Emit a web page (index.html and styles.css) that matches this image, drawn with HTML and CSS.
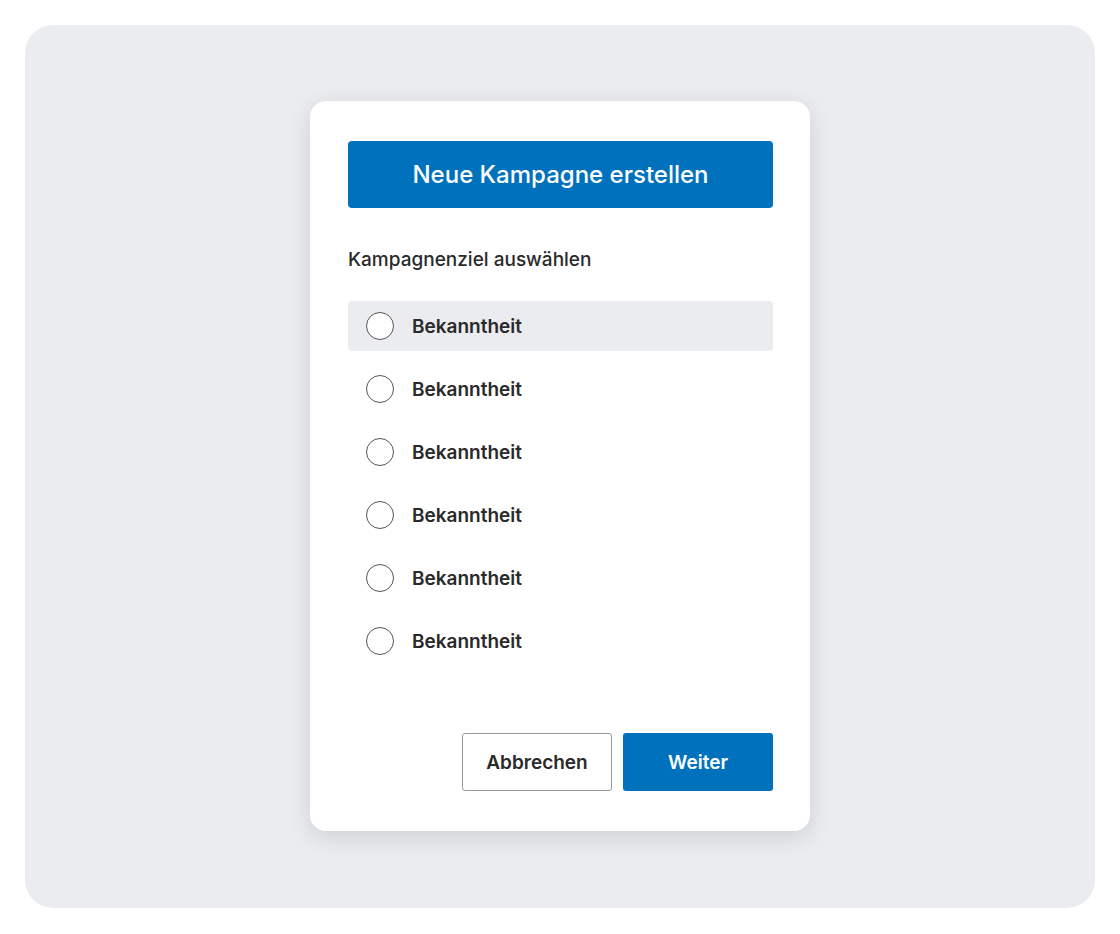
FILE: index.html
```html
<!DOCTYPE html>
<html lang="de">
<head>
    <meta charset="UTF-8">
    <meta name="viewport" content="width=device-width, initial-scale=1.0">
    <title>Neue Kampagne erstellen</title>
    <link rel="stylesheet" href="styles.css">
</head>
<body>
    <div class="panel">
        <div class="card">
            <div class="card-header">Neue Kampagne erstellen</div>
            <p class="label">Kampagnenziel auswählen</p>
            <div class="options">
                <label class="option active"><span class="radio"></span>Bekanntheit</label>
                <label class="option"><span class="radio"></span>Bekanntheit</label>
                <label class="option"><span class="radio"></span>Bekanntheit</label>
                <label class="option"><span class="radio"></span>Bekanntheit</label>
                <label class="option"><span class="radio"></span>Bekanntheit</label>
                <label class="option"><span class="radio"></span>Bekanntheit</label>
            </div>
            <div class="actions">
                <button class="btn btn-outline">Abbrechen</button>
                <button class="btn btn-primary">Weiter</button>
            </div>
        </div>
    </div>
</body>
</html>
```

FILE: styles.css
```css
body {
    margin: 0;
    font-family: Inter, "Noto Sans", sans-serif;
    background-color: #fff;
    color: #2a2a2a;
}
.panel {
    margin: 25px;
    height: 883px;
    padding-top: 76px;
    box-sizing: border-box;
    border-radius: 28px;
    background-color: #ebecf0;
    display: flex;
    align-items: flex-start;
    justify-content: center;
}
.card {
    width: 425px;
    padding: 40px 37px 40px 38px;
    background-color: #fff;
    border-radius: 16px;
    box-shadow: 0 6px 24px rgba(0,0,0,0.12);
    display: flex;
    flex-direction: column;
}
.card-header {
    height: 67px;
    border-radius: 4px;
    background-color: #0072bd;
    color: #fff;
    font-size: 24px;
    font-weight: 500;
    display: flex;
    align-items: center;
    justify-content: center;
}
.label {
    margin: 41px 0 30px;
    font-size: 19px;
    line-height: 22px;
    font-weight: 500;
}
.options {
    display: flex;
    flex-direction: column;
    gap: 13px;
}
.option {
    height: 50px;
    padding-left: 18px;
    border-radius: 4px;
    display: flex;
    align-items: center;
    font-size: 19px;
    font-weight: 600;
}
.option.active {
    background-color: #ebecf0;
}
.radio {
    width: 26px;
    height: 26px;
    margin-right: 18px;
    border: 1px solid #555;
    border-radius: 50%;
    background-color: #fff;
}
.actions {
    margin-top: 67px;
    display: flex;
    justify-content: flex-end;
    gap: 11px;
}
.btn {
    width: 150px;
    height: 58px;
    border-radius: 3px;
    font-family: inherit;
    font-size: 19px;
    font-weight: 600;
    cursor: pointer;
}
.btn-outline {
    border: 1px solid #999;
    background-color: #fff;
    color: #2a2a2a;
}
.btn-primary {
    border: none;
    background-color: #0072bd;
    color: #fff;
}
```
